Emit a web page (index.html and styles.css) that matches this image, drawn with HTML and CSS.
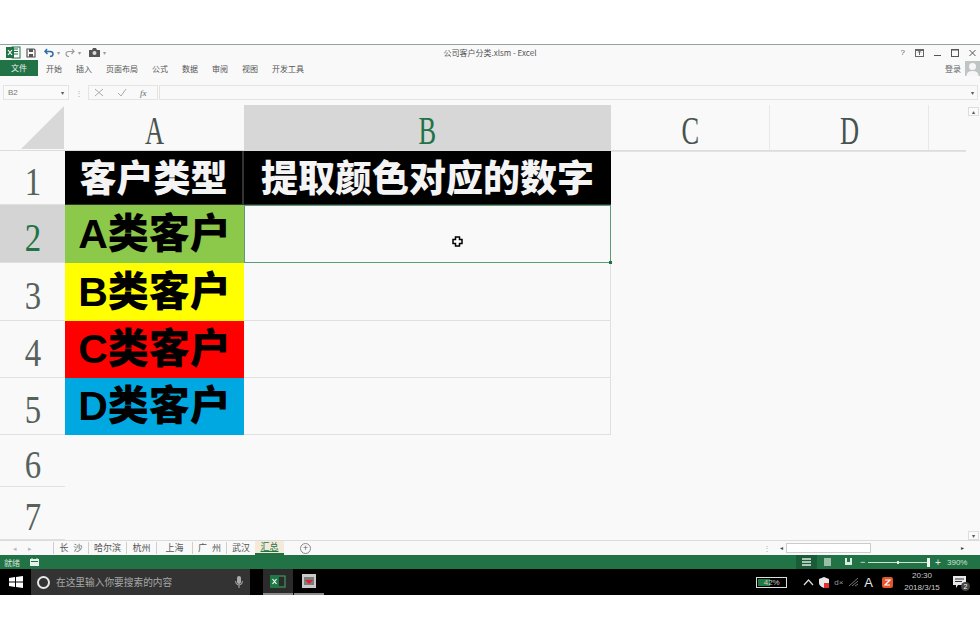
FILE: index.html
```html
<!DOCTYPE html>
<html lang="zh">
<head>
<meta charset="utf-8">
<title>公司客户分类.xlsm - Excel</title>
<link rel="stylesheet" href="styles.css">
</head>
<body>
<div class="app">
  <div class="titlebar">
    <div class="qat">
      <svg class="ic" width="15" height="13" viewBox="0 0 15 13"><rect x="6" y="1" width="8" height="11" fill="#fff" stroke="#217346"/><path d="M8 3h4M8 5.500h4M8 8h4" stroke="#217346"/><rect x="0" y="1" width="8" height="11" fill="#217346"/><path d="M2 4l4 5M6 4l-4 5" stroke="#fff" stroke-width="1.200"/></svg>
      <svg class="ic" width="10" height="10" viewBox="0 0 10 10"><path d="M1 1h7l1 1v7H1z" fill="none" stroke="#555" stroke-width="1.200"/><rect x="3" y="1" width="4" height="3" fill="#555"/><rect x="3" y="6" width="4" height="3" fill="#555"/></svg>
      <svg class="ic gap-l" width="10" height="9" viewBox="0 0 10 9"><path d="M3 1L1 3.500 3.500 6M1 3.500h5q3 0 3 2.500T6 8.500" fill="none" stroke="#2a6ea8" stroke-width="1.500"/></svg>
      <span class="caret">▾</span>
      <svg class="ic" width="10" height="9" viewBox="0 0 10 9"><path d="M7 1l2 2.500L6.500 6M9 3.500H4q-3 0-3 2.500t3 2.500" fill="none" stroke="#999" stroke-width="1.200"/></svg>
      <span class="caret">▾</span>
      <svg class="ic gap-l" width="11" height="9" viewBox="0 0 11 9"><path d="M0 2h3l1-2h3l1 2h3v7H0z" fill="#555"/><circle cx="5.500" cy="5" r="2" fill="#ddd"/></svg>
      <span class="caret">▾</span>
    </div>
    <div class="doc-title">公司客户分类.xlsm - Excel</div>
    <div class="win">
      <span class="win-q">?</span>
      <svg width="9" height="8" viewBox="0 0 9 8"><rect x=".5" y=".5" width="8" height="7" fill="none" stroke="#666"/><path d="M4.500 2v4M3 3.500l1.500-1.500L6 3.500M1 1.500h7" stroke="#666" fill="none"/></svg>
      <svg width="7" height="8" viewBox="0 0 7 8"><path d="M0 6.500h7" stroke="#555"/></svg>
      <svg width="8" height="8" viewBox="0 0 8 8"><rect x=".5" y=".5" width="7" height="7" fill="none" stroke="#555"/><path d="M0 1h8" stroke="#555"/></svg>
      <svg width="7" height="8" viewBox="0 0 7 8"><path d="M.5 1l6 6M6.500 1l-6 6" stroke="#555"/></svg>
    </div>
  </div>

  <div class="ribbon">
    <div class="tabs">
      <span class="file">文件</span>
      <span>开始</span><span>插入</span><span>页面布局</span><span>公式</span><span>数据</span><span>审阅</span><span>视图</span><span>开发工具</span>
    </div>
    <div class="login">
      <span>登录</span>
      <svg width="15" height="15" viewBox="0 0 15 15"><rect width="15" height="15" fill="#bfc4c4"/><circle cx="7.500" cy="5.500" r="3.500" fill="#f6f6f6"/><path d="M1.500 15q0-5 6-5t6 5z" fill="#f6f6f6"/></svg>
    </div>
  </div>

  <div class="fbar">
    <div class="namebox"><span>B2</span><span class="caret dark">▾</span></div>
    <span class="dots">⋮</span>
    <div class="fbtns">
      <svg width="10" height="9" viewBox="0 0 10 9"><path d="M1 1l8 7M9 1L1 8" stroke="#aaa"/></svg>
      <svg width="10" height="9" viewBox="0 0 10 9"><path d="M1 5l3 3 5-7" stroke="#aaa" fill="none"/></svg>
      <i class="fx">fx</i>
    </div>
    <div class="finput"><span class="caret dark">▾</span></div>
  </div>

  <div class="sheet-wrap">
    <div class="sheet">
      <div class="corner"><svg width="43" height="43" viewBox="0 0 43 43"><path d="M43 0v43H0z" fill="#d8d8d8"/></svg></div>
      <div class="col"><span class="lbl">A</span></div>
      <div class="col sel"><span class="lbl">B</span></div>
      <div class="col line"><span class="lbl">C</span></div>
      <div class="col line"><span class="lbl">D</span></div>
      <div class="col"></div>

      <div class="row r1"><span class="num">1</span></div>
      <div class="cell head">客户类型</div>
      <div class="cell head">提取颜色对应的数字</div>
      <div class="blank b"></div>

      <div class="row sel r2"><span class="num">2</span></div>
      <div class="cell green">A类客户</div>
      <div class="cell active">
        <svg class="cursor" width="11" height="11" viewBox="0 0 11 11"><path d="M3.500 1h4v2.500H10v4H7.500V10h-4V7.500H1v-4h2.500z" fill="#fff" stroke="#000" stroke-width="1.500"/></svg>
        <i class="handle"></i>
      </div>
      <div class="blank"></div>

      <div class="row r3"><span class="num">3</span></div>
      <div class="cell yellow">B类客户</div>
      <div class="cell empty"></div>
      <div class="blank"></div>

      <div class="row r4"><span class="num">4</span></div>
      <div class="cell red">C类客户</div>
      <div class="cell empty"></div>
      <div class="blank"></div>

      <div class="row r5"><span class="num">5</span></div>
      <div class="cell blue">D类客户</div>
      <div class="cell empty"></div>
      <div class="blank"></div>

      <div class="row r6"><span class="num">6</span></div>
      <div class="blank wide"></div>
      <div class="row r7"><span class="num">7</span></div>
      <div class="blank wide"></div>
    </div>
    <div class="vscroll">
      <span class="sbtn">▴</span>
      <span class="sbtn">▾</span>
    </div>
  </div>

  <div class="sheetbar">
    <div class="arrows"><span>◂</span><span>▸</span></div>
    <div class="sheets">
      <span class="s1">长 沙</span><span class="s2">哈尔滨</span><span class="s3">杭州</span><span class="s4">上海</span><span class="s5">广 州</span><span class="s6">武汉</span><span class="s7 on">汇总</span>
      <span class="plus">+</span>
    </div>
    <div class="hscroll">
      <span class="dots">⋮</span>
      <span class="hs-btn">◂</span>
      <span class="thumb"></span>
      <span class="hs-btn right">▸</span>
    </div>
  </div>

  <div class="status">
    <div class="st-left">
      <span>就绪</span>
      <svg width="9" height="8" viewBox="0 0 9 8"><rect y="1" width="9" height="7" fill="#e6efe9"/><path d="M2 0v2M7 0v2" stroke="#e6efe9"/><path d="M1 3.500h7" stroke="#217346"/></svg>
    </div>
    <div class="st-right">
      <span class="view on"><svg width="9" height="8" viewBox="0 0 9 8"><path d="M0 1h9M0 4h9M0 7h9" stroke="#dfe9e3" stroke-width="1.500"/></svg></span>
      <span class="view"><svg width="9" height="8" viewBox="0 0 9 8"><rect x="1" y="0" width="7" height="8" fill="#9dbcaa"/></svg></span>
      <span class="view"><svg width="9" height="8" viewBox="0 0 9 8"><rect x="1" y="0" width="7" height="7" fill="#dfe9e3"/><rect x="3" y="0" width="3" height="4" fill="#217346"/></svg></span>
      <span class="zoom-m">−</span>
      <span class="slider"><i class="tick"></i><i class="knob"></i></span>
      <span class="zoom-p">+</span>
      <span class="pct">390%</span>
    </div>
  </div>

  <div class="taskbar">
    <div class="start"><svg width="14" height="12" viewBox="0 0 14 12"><path d="M0 2l6-1v4.500H0zM7 .9L14 0v5.500H7zM0 6.500h6V11l-6-1zM7 6.500h7V12l-7-1z" fill="#fff"/></svg></div>
    <div class="search">
      <span class="cortana"></span>
      <span class="s-text">在这里输入你要搜索的内容</span>
      <svg width="8" height="12" viewBox="0 0 8 12"><rect x="2" y="0" width="4" height="8" rx="2" fill="#aaa"/><path d="M.5 5q0 4 3.500 4t3.500-4M4 9v3" stroke="#aaa" fill="none"/></svg>
    </div>
    <div class="tb-sep"></div>
    <div class="tb-app on"><svg width="16" height="13" viewBox="0 0 16 13"><rect x="8" y="1" width="7" height="11" fill="none" stroke="#3fae6e"/><rect y="0" width="9" height="13" fill="#1e7a45"/><path d="M2.500 4l4 5M6.500 4l-4 5" stroke="#fff" stroke-width="1.200"/></svg></div>
    <div class="tb-app"><svg width="14" height="14" viewBox="0 0 14 14"><rect width="14" height="14" fill="#c9c9c9"/><rect x="2" y="3" width="10" height="8" fill="#7c7c7c"/><path d="M3 6h8l-4 4z" fill="#e0202a"/></svg></div>
    <div class="tray">
      <span class="battery"><i></i><b>42%</b></span>
      <svg class="up" width="11" height="7" viewBox="0 0 11 7"><path d="M1 6l4.500-5L10 6" stroke="#ddd" fill="none" stroke-width="1.200"/></svg>
      <svg width="10" height="11" viewBox="0 0 10 11"><path d="M5 0l5 2v4q0 3-5 5-5-2-5-5V2z" fill="#e8e8e8"/><rect x="5" y="6" width="5" height="5" fill="#e03030"/></svg>
      <span class="vol">d×</span>
      <svg width="11" height="10" viewBox="0 0 11 10"><path d="M1 9L10 1M4 9l6-5M7 9l3-2" stroke="#777" fill="none"/></svg>
      <span class="ime">A</span>
      <svg width="11" height="11" viewBox="0 0 11 11"><rect width="11" height="11" rx="2" fill="#e2562a"/><path d="M3 3h5L3 8h5" stroke="#fff" fill="none" stroke-width="1.200"/></svg>
      <span class="clock"><span>20:30</span><span>2018/3/15</span></span>
      <span class="note"><svg width="13" height="12" viewBox="0 0 13 12"><path d="M0 0h13v9H5l-2 3V9H0z" fill="#e8e8e8"/><path d="M2 3h9M2 5.500h7" stroke="#333"/></svg><b>2</b></span>
    </div>
  </div>
</div>
</body>
</html>
```
FILE: styles.css
```css
* { box-sizing: border-box; }
html, body { margin: 0; height: 100%; background: #fff; }
body { padding-top: 44px; font-family: "Noto Sans CJK SC", "Liberation Sans", sans-serif; overflow: hidden; }
svg { display: block; flex: none; }

.app { width: 980px; height: 551px; background: #f9f9f9; border-top: 1px solid #8fa3a0; display: flex; flex-direction: column; }

.titlebar { height: 15px; display: flex; align-items: center; position: relative; padding: 0 4px 0 6px; }
.qat { display: flex; align-items: center; gap: 5px; flex: 1; }
.gap-l { margin-left: 3px; }
.caret { font-size: 6px; line-height: 1; color: #999; margin-left: -2px; }
.caret.dark { color: #555; margin: 0; }
.doc-title { position: absolute; left: 0; right: 0; text-align: center; font-size: 8px; color: #555; line-height: 15px; }
.win { display: flex; align-items: center; gap: 10px; }
.win-q { font: 8px "Liberation Sans", sans-serif; color: #666; }

.ribbon { height: 16px; display: flex; justify-content: space-between; align-items: center; }
.tabs { display: flex; align-items: center; gap: 14px; font-size: 8px; color: #555; height: 16px; }
.file { width: 38px; height: 16px; line-height: 16px; background: #217346; color: #e8f1ec; text-align: center; margin-right: -6px; }
.login { display: flex; align-items: center; gap: 4px; font-size: 8px; color: #666; }

.fbar { height: 17px; margin-top: 8px; display: flex; align-items: center; padding: 0 2px 0 3px; }
.namebox { width: 66px; height: 15px; border: 1px solid #e4e4e4; background: #fafafa; display: flex; align-items: center; justify-content: space-between; padding: 0 4px; font: 8px "Liberation Sans", sans-serif; color: #777; }
.dots { width: 19px; text-align: center; font-size: 8px; color: #aaa; line-height: 1; }
.fbtns { width: 70px; height: 15px; border: 1px solid #e4e4e4; display: flex; align-items: center; gap: 13px; padding-left: 5px; margin-right: 1px; }
.fx { font: italic 9px "Liberation Serif", serif; color: #666; }
.finput { flex: 1; height: 15px; border: 1px solid #e4e4e4; display: flex; align-items: center; justify-content: flex-end; padding-right: 3px; }

.sheet-wrap { height: 435px; margin-top: 4px; display: flex; position: relative; }
.sheet { flex: 1; display: grid; grid-template-columns: 65px 179px 367px 159px 159px 1fr; grid-template-rows: 46px 54px 58px 58px 57px 57px 52px 53px; }

.corner { background: #f9f9f9; display: flex; justify-content: flex-end; align-items: flex-end; padding: 0 1px 1px 0; border-bottom: 1px solid #ddd; }
.col { font: 40px/1 "Liberation Serif", serif; color: #47534d; display: flex; align-items: center; justify-content: center; border-bottom: 1px solid #ddd; padding-top: 7px; }
.col.sel { background: #d7d7d7; color: #217346; }
.col.line { border-right: 1px solid #e8e8e8; }
.lbl { display: inline-block; transform: scaleX(.66); }
.num { display: inline-block; transform: scaleX(.82); }

.row { font: 40px/1 "Liberation Serif", serif; color: #57625c; display: flex; align-items: center; justify-content: center; border-bottom: 1px solid #e0e0e0; padding-top: 8px; }
.row.sel { background: #d4d4d4; color: #217346; }

.cell { display: flex; align-items: center; justify-content: center; font-weight: 900; line-height: 1; font-family: "Liberation Sans", "Noto Sans CJK SC", sans-serif; font-size: 41px; white-space: nowrap; color: #000; }
.head { background: #000; color: #f4f4f4; font-size: 37px; border-right: 2px solid #333; border-bottom: 1px solid #333; padding-top: 3px; }
.head + .head { border-right: 0; }
.green { background: #8cc84a; }
.yellow { background: #ffff00; }
.red { background: #ff0000; }
.blue { background: #00a8e2; }
.active { background: #f9f9f9; border: 1px solid #5f9a77; position: relative; }
.empty { background: #f9f9f9; border-right: 1px solid #e0e0e0; border-bottom: 1px solid #e0e0e0; }
.blank { grid-column: 4 / 7; }
.blank.b { border-top: 1px solid #e2e2e2; }
.blank.wide { grid-column: 2 / 7; }
.cursor { position: absolute; left: 207px; top: 30px; }
.handle { position: absolute; right: -2px; bottom: -2px; width: 3px; height: 3px; background: #217346; }

.vscroll { width: 14px; display: flex; flex-direction: column; justify-content: space-between; align-items: center; padding-top: 2px; background: #f9f9f9; position: absolute; right: 0; top: 0; bottom: 0; }
.sbtn { width: 11px; height: 9px; border: 1px solid #ddd; font-size: 6px; line-height: 7px; text-align: center; color: #555; background: #fbfbfb; }

.sheetbar { height: 15px; display: flex; align-items: center; border-top: 1px solid #dcdcdc; font-size: 9px; color: #555; }
.arrows { width: 53px; display: flex; gap: 11px; padding-left: 13px; font-size: 7px; color: #bbb; }
.sheets { width: 263px; display: flex; align-items: center; height: 14px; position: relative; }
.sheets > span { border-left: 1px solid #cfcfcf; line-height: 12px; white-space: nowrap; text-align: center; word-spacing: 3px; }
.s1 { width: 35px; }
.s2 { width: 38px; }
.s3 { width: 30px; }
.s4 { width: 36px; }
.s5 { width: 34px; }
.s6 { width: 29px; }
.sheets .on { width: 29px; background: #f3ead9; color: #217346; border-bottom: 2px solid #217346; border-left: 0; text-decoration: underline; }
.sheets .plus { margin-left: 16px; width: 11px; height: 11px; border: 1px solid #888; border-radius: 50%; line-height: 8px; text-align: center; color: #666; font-size: 9px; }
.hscroll { display: flex; align-items: center; flex: 1; margin-left: 441px; }
.hs-btn { width: 10px; height: 10px; font-size: 6px; line-height: 10px; text-align: center; color: #444; }
.thumb { width: 85px; height: 10px; background: #fff; border: 1px solid #ccc; }
.right { margin-left: 86px; }

.status { height: 14px; background: #217346; display: flex; justify-content: space-between; align-items: center; color: #cfe0d6; font-size: 8px; }
.st-left { display: flex; align-items: center; gap: 10px; padding-left: 4px; }
.st-right { display: flex; align-items: center; height: 14px; padding-right: 5px; }
.view { width: 21px; height: 14px; display: flex; align-items: center; justify-content: center; }
.view.on { background: #1a5c38; }
.zoom-m { margin-left: 1px; width: 8px; color: #e6efe9; font: 9px "Liberation Sans", sans-serif; }
.slider { width: 62px; height: 1px; background: #cfe0d6; position: relative; }
.tick { position: absolute; left: 29px; top: -1px; width: 2px; height: 3px; background: #e6efe9; }
.knob { position: absolute; left: 59px; top: -4px; width: 3px; height: 9px; background: #f2f2f2; }
.zoom-p { width: 14px; margin-left: 1px; text-align: center; color: #e6efe9; font: 10px "Liberation Sans", sans-serif; }
.pct { width: 28px; margin-left: 2px; font: 8px "Liberation Sans", sans-serif; }

.taskbar { flex: 1; background: #000; display: flex; align-items: stretch; color: #ddd; }
.start { width: 31px; display: flex; align-items: center; justify-content: center; }
.search { width: 219px; background: #333; display: flex; align-items: center; padding: 0 4px 0 6px; color: #a8a8a8; }
.cortana { width: 13px; height: 13px; border: 2px solid #e8e8e8; border-radius: 50%; flex: none; }
.s-text { flex: 1; font-size: 9.7px; margin-left: 6px; white-space: nowrap; }
.search svg { margin-right: 3px; }
.tb-sep { width: 13px; }
.tb-app { width: 30px; margin-right: 1px; display: flex; align-items: center; justify-content: center; border-bottom: 2px solid #8a8a8a; }
.tb-app.on { background: #2b2b2b; }
.tray { flex: 1; display: flex; align-items: center; justify-content: flex-end; gap: 5px; padding-right: 14px; position: relative; }
.battery { width: 31px; height: 11px; border: 1px solid #ddd; margin-right: 11px; position: relative; font: 8px/9px "Liberation Sans", sans-serif; text-align: center; color: #ccc; }
.battery i { position: absolute; left: 1px; top: 1px; bottom: 1px; width: 12px; background: #1e7a3e; }
.battery b { position: relative; font-weight: 400; }
.vol { font: 8px "Liberation Sans", sans-serif; color: #999; }
.ime { font: 13px "Liberation Sans", sans-serif; color: #e8e8e8; margin-right: 4px; }
.clock { display: flex; flex-direction: column; align-items: center; font: 8px/12px "Liberation Sans", sans-serif; color: #ccc; margin-left: 3px; width: 42px; white-space: nowrap; }
.note { position: relative; margin-left: 5px; }
.note b { position: absolute; right: -4px; bottom: -3px; width: 9px; height: 9px; border-radius: 50%; background: #444; font: 7px/9px "Liberation Sans", sans-serif; text-align: center; color: #fff; }
```
